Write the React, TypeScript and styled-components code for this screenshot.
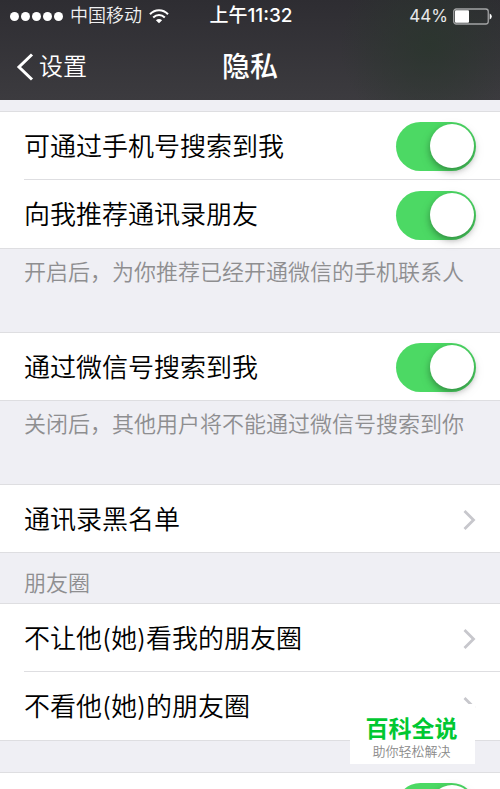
import React, { useState } from 'react';
import styled, { createGlobalStyle } from 'styled-components';

const GlobalStyle = createGlobalStyle`
  *, *::before, *::after { box-sizing: border-box; }
  body {
    margin: 0;
    background: #efeff4;
    font-family: Inter, "Noto Sans CJK SC", sans-serif;
  }
  button { font: inherit; border: 0; background: none; padding: 0; cursor: pointer; }
`;

const Screen = styled.div`
  position: relative;
  display: flex;
  flex-direction: column;
  height: 100vh;
  overflow: hidden;
`;

const Header = styled.header`
  flex: none;
  color: #fff;
  background:
    radial-gradient(circle at 86% 45%, rgba(42, 54, 45, 0.8), rgba(42, 54, 45, 0) 90px),
    linear-gradient(#2e2d32, #3c3b3f);
`;

const StatusBar = styled.div`
  display: grid;
  grid-template-columns: 1fr auto 1fr;
  align-items: center;
  height: 32px;
  padding: 0 8px 0 10px;
  font-size: 18px;
  line-height: 24px;
`;

const Carrier = styled.div`
  display: flex;
  align-items: center;
  gap: 7px;
  color: #f0f0f1;
  font-weight: 350;
  white-space: nowrap;
`;

const Signal = styled.div`
  display: flex;
  gap: 2px;
`;

const Dot = styled.span`
  width: 9px;
  height: 9px;
  border-radius: 50%;
  background: #fff;
`;

const Clock = styled.time`
  font-size: 19px;
  font-weight: 500;
`;

const Power = styled.div`
  display: flex;
  align-items: center;
  justify-content: flex-end;
  gap: 5px;
  color: #e8e8e9;
  font-size: 17px;
`;

const NavBar = styled.nav`
  display: grid;
  grid-template-columns: 1fr auto 1fr;
  align-items: center;
  height: 68px;
  padding: 2px 16px 0;
`;

const BackButton = styled.button`
  display: flex;
  align-items: center;
  justify-self: start;
  gap: 5px;
  color: #fff;
  font-size: 24px;
  font-weight: 350;
  line-height: 32px;
`;

const Title = styled.h1`
  margin: 0;
  font-size: 28px;
  font-weight: 500;
  line-height: 36px;
`;

const Settings = styled.main`
  flex: 1;
  min-height: 0;
  overflow-y: auto;
  scrollbar-width: none;
  padding-top: 11px;
`;

const Group = styled.section`
  background: #fff;
  border-top: 1px solid #dedee1;
  border-bottom: 1px solid #dedee1;
`;

const rowLayout = `
  display: flex;
  align-items: center;
  justify-content: space-between;
  min-height: 67px;
  padding: 2px 24px 0 0;
  margin-left: 24px;
  color: #000;
  font-size: 26px;
  font-weight: 350;
  line-height: 36px;
  text-decoration: none;

  & + & { border-top: 1px solid #dedee1; min-height: 69px; }
`;

const SwitchRow = styled.label`${rowLayout}`;
const LinkRow = styled.a`
  ${rowLayout}
`;

const Toggle = styled.input`
  appearance: none;
  flex: none;
  width: 80px;
  height: 49px;
  margin: 0;
  padding: 2px;
  border-radius: 25px;
  background: #e5e5ea;
  cursor: pointer;

  &::before {
    content: "";
    display: block;
    width: 44px;
    height: 44px;
    border-radius: 50%;
    background: #fff;
    box-shadow: 0 3px 6px rgba(0, 0, 0, 0.3), 0 4px 14px rgba(0, 0, 0, 0.08);
  }

  &:checked { background: #4cd964; }
  &:checked::before { margin-left: 32px; }
`;

const Note = styled.p`
  margin: 0;
  min-height: 83px;
  padding: 7px 16px 0 24px;
  color: #8e8e90;
  font-size: 22px;
  font-weight: 350;
  line-height: 32px;
`;

const GroupTitle = styled.h2`
  margin: 0;
  padding: 14px 24px 4px;
  color: #8e8e90;
  font-size: 22px;
  font-weight: 350;
  line-height: 32px;
`;

const Spacer = styled.div`
  height: 31px;
`;

const Stamp = styled.aside`
  position: absolute;
  right: 25px;
  bottom: 25px;
  width: 125px;
  padding: 11px 2px 5px 0;
  background: #fff;
  text-align: center;
`;

const StampName = styled.div`
  color: #00c832;
  font-size: 23px;
  font-weight: 700;
  line-height: 28px;
`;

const StampLine = styled.div`
  color: #8a8a8a;
  font-size: 13px;
  font-weight: 350;
  line-height: 16px;
`;

const WifiIcon = () => (
  <svg width="20" height="15" viewBox="0 0 20 15" fill="none" stroke="#fff" strokeWidth="2" aria-hidden="true">
    <path d="M1 5.2 C6 -0.2 14 -0.2 19 5.2" />
    <path d="M4.2 8.5 C7.6 5 12.4 5 15.8 8.5" />
    <path d="M10 14.2 L6.9 11.2 C8.6 9.5 11.4 9.5 13.1 11.2 Z" fill="#fff" stroke="none" />
  </svg>
);

const BatteryIcon = () => (
  <svg width="39" height="17" viewBox="0 0 39 17" aria-hidden="true">
    <rect x="0.75" y="1" width="34.5" height="15" rx="2.5" fill="none" stroke="#a3a4a5" strokeWidth="1.3" />
    <rect x="2" y="2.3" width="14" height="12.4" rx="1" fill="#fff" />
    <path d="M36.7 5.5 Q38.8 6.5 38.8 8.5 Q38.8 10.5 36.7 11.5 Z" fill="#fff" />
  </svg>
);

const BackIcon = () => (
  <svg width="18" height="28" viewBox="0 0 18 28" fill="none" stroke="#fff" strokeWidth="3" aria-hidden="true">
    <path d="M16 1.5 L3 14 L16 26.5" />
  </svg>
);

const Chevron = () => (
  <svg width="13" height="20" viewBox="0 0 13 20" fill="none" stroke="#c7c7cc" strokeWidth="2.8" aria-hidden="true">
    <path d="M1.5 1 L10.5 10 L1.5 19" />
  </svg>
);

function SwitchItem({ label, name }: { label?: string; name?: string }) {
  const [on, setOn] = useState(true);
  return (
    <SwitchRow>
      <span>{label}</span>
      <Toggle
        type="checkbox"
        role="switch"
        aria-label={name}
        checked={on}
        onChange={() => setOn(!on)}
      />
    </SwitchRow>
  );
}

function LinkItem({ label }: { label: string }) {
  return (
    <LinkRow href="#">
      {label}
      <Chevron />
    </LinkRow>
  );
}

export default function App() {
  return (
    <Screen lang="zh-CN">
      <GlobalStyle />
      <Header>
        <StatusBar>
          <Carrier>
            <Signal>
              {[1, 2, 3, 4, 5].map((n) => <Dot key={n} />)}
            </Signal>
            中国移动
            <WifiIcon />
          </Carrier>
          <Clock>上午11:32</Clock>
          <Power>
            44%
            <BatteryIcon />
          </Power>
        </StatusBar>
        <NavBar>
          <BackButton type="button"><BackIcon />设置</BackButton>
          <Title>隐私</Title>
        </NavBar>
      </Header>
      <Settings>
        <Group>
          <SwitchItem label="可通过手机号搜索到我" />
          <SwitchItem label="向我推荐通讯录朋友" />
        </Group>
        <Note>开启后，为你推荐已经开通微信的手机联系人</Note>
        <Group>
          <SwitchItem label="通过微信号搜索到我" />
        </Group>
        <Note>关闭后，其他用户将不能通过微信号搜索到你</Note>
        <Group>
          <LinkItem label="通讯录黑名单" />
        </Group>
        <GroupTitle>朋友圈</GroupTitle>
        <Group>
          <LinkItem label="不让他(她)看我的朋友圈" />
          <LinkItem label="不看他(她)的朋友圈" />
        </Group>
        <Spacer />
        <Group>
          <SwitchItem name="朋友圈" />
        </Group>
      </Settings>
      <Stamp>
        <StampName>百科全说</StampName>
        <StampLine>助你轻松解决</StampLine>
      </Stamp>
    </Screen>
  );
}
